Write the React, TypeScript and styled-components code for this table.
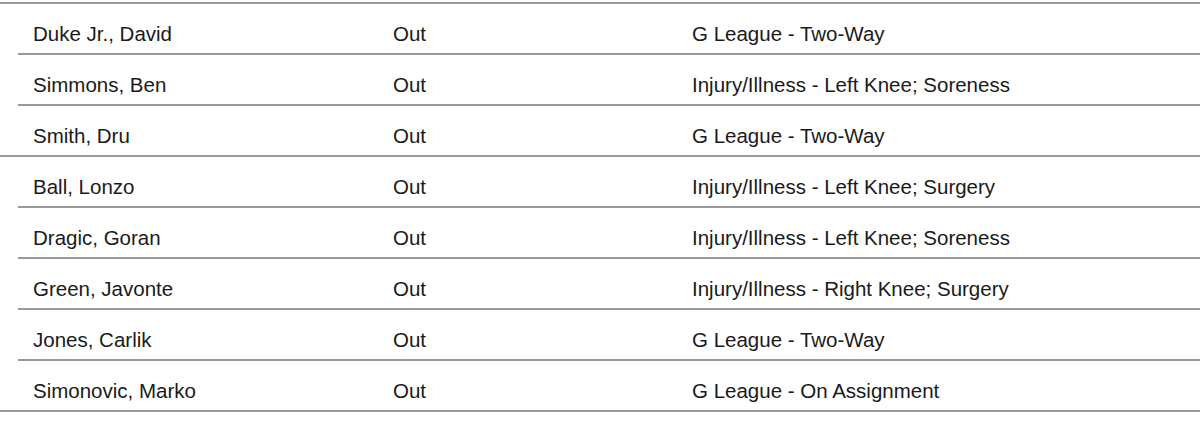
import React from "react";
import styled, { createGlobalStyle } from "styled-components";

const Global = createGlobalStyle`
  html, body { margin: 0; padding: 0; background: #ffffff; }
  body { font-family: "Liberation Sans", Arial, sans-serif; }
`;

const Table = styled.div`
  margin-top: 2px;
  border-top: 2px solid #9a9a9a;
  width: 1200px;
`;

const Row = styled.div<{ $full?: boolean }>`
  display: grid;
  grid-template-columns: 360px 299px 1fr;
  margin-left: ${(p) => (p.$full ? 0 : 18)}px;
  padding-left: ${(p) => (p.$full ? 33 : 15)}px;
  height: 49px;
  box-sizing: content-box;
  border-bottom: 2px solid #9a9a9a;
  align-items: start;
`;

const Cell = styled.div`
  padding-top: 18px;
  font-size: 20.5px;
  line-height: 23px;
  color: #1a1a1a;
  white-space: nowrap;
`;

const rows = [
  { name: "Duke Jr., David", status: "Out", reason: "G League - Two-Way" },
  { name: "Simmons, Ben", status: "Out", reason: "Injury/Illness - Left Knee; Soreness" },
  { name: "Smith, Dru", status: "Out", reason: "G League - Two-Way", full: true },
  { name: "Ball, Lonzo", status: "Out", reason: "Injury/Illness - Left Knee; Surgery" },
  { name: "Dragic, Goran", status: "Out", reason: "Injury/Illness - Left Knee; Soreness" },
  { name: "Green, Javonte", status: "Out", reason: "Injury/Illness - Right Knee; Surgery" },
  { name: "Jones, Carlik", status: "Out", reason: "G League - Two-Way" },
  { name: "Simonovic, Marko", status: "Out", reason: "G League - On Assignment", full: true },
];

export default function App() {
  return (
    <>
      <Global />
      <Table>
        {rows.map((r) => (
          <Row key={r.name} $full={r.full}>
            <Cell>{r.name}</Cell>
            <Cell>{r.status}</Cell>
            <Cell>{r.reason}</Cell>
          </Row>
        ))}
      </Table>
    </>
  );
}
